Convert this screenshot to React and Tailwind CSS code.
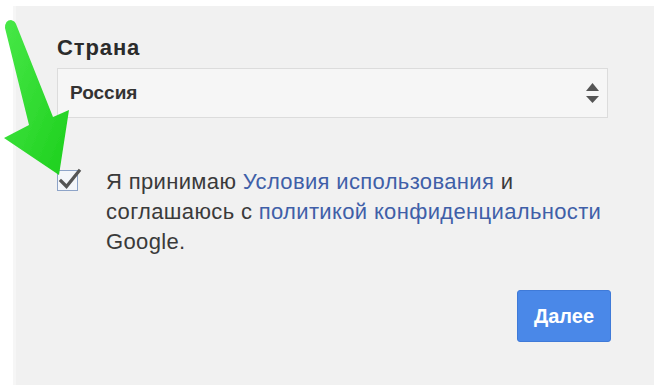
import React from 'react';

function GreenArrow() {
  return (
    <svg className="absolute left-0 top-0 pointer-events-none" width="80" height="190" viewBox="0 0 80 190">
      <defs>
        <linearGradient id="arrowFill" x1="0" y1="0" x2="1" y2="1">
          <stop offset="0" stopColor="#48e848" />
          <stop offset="1" stopColor="#1ccf1c" />
        </linearGradient>
        <filter id="soft" x="-10%" y="-10%" width="120%" height="120%">
          <feGaussianBlur stdDeviation="0.7" />
        </filter>
      </defs>
      <path
        d="M5 28 Q5 20 11 20 Q15 21 16 24 L53 117 L69 110 L59 175 L4 138 L29 125 Z"
        fill="url(#arrowFill)"
        filter="url(#soft)"
      />
    </svg>
  );
}

function SelectArrows() {
  return (
    <svg width="13" height="21" viewBox="0 0 13 21">
      <path d="M6.5 0 L13 8 L0 8 Z" fill="#555" />
      <path d="M0 13 L13 13 L6.5 20 Z" fill="#555" />
    </svg>
  );
}

function CheckBox() {
  return (
    <div className="relative w-[21px] h-[21px] shrink-0 border border-[#8ea4c8] bg-[#f4f6fa] mt-[3px]">
      <svg className="absolute -left-[1px] -top-[3px]" width="27" height="24" viewBox="0 0 27 24">
        <path d="M4 13 L9.5 18.5 L22 3" fill="none" stroke="#555" strokeWidth="3.2" strokeLinecap="square" />
      </svg>
    </div>
  );
}

export default function App() {
  return (
    <div className="relative w-[654px] h-[386px] bg-white overflow-hidden" style={{ fontFamily: '"Liberation Sans", Arial, sans-serif' }}>
      <div className="ml-[13px] mt-[6px] h-[379px] bg-[#f1f1f1] border-l-[3px] border-[#f6f6f6] pl-[41px] pr-[46px] pt-[29px] flex flex-col">
        {/* Country */}
        <label className="text-[22px] leading-[26px] font-bold text-[#2b2b2b] tracking-[0.9px]">Страна</label>
        <div className="mt-[7px] h-[50px] flex items-center justify-between bg-[#f6f6f6] border border-[#dcdcdc] pl-[12px] pr-[8px]">
          <span className="text-[19px] font-bold text-[#333]">Россия</span>
          <SelectArrows />
        </div>

        {/* Terms */}
        <div className="mt-[49px] flex items-start gap-[28px]">
          <CheckBox />
          <p className="text-[22px] leading-[30px] tracking-[0.35px] text-[#3a3a3a]">
            Я принимаю <a className="text-[#3f5fa8]">Условия использования</a> и
            <br />
            соглашаюсь с <a className="text-[#3f5fa8]">политикой конфиденциальности</a>
            <br />
            Google.
          </p>
        </div>

        {/* Next */}
        <div className="flex justify-end mr-[-3px] mt-[33px]">
          <button className="w-[94px] h-[52px] rounded-[3px] bg-[#4a88e8] border border-[#3f7ad8] text-white text-[20px] font-bold">
            Далее
          </button>
        </div>
      </div>
      <GreenArrow />
    </div>
  );
}
